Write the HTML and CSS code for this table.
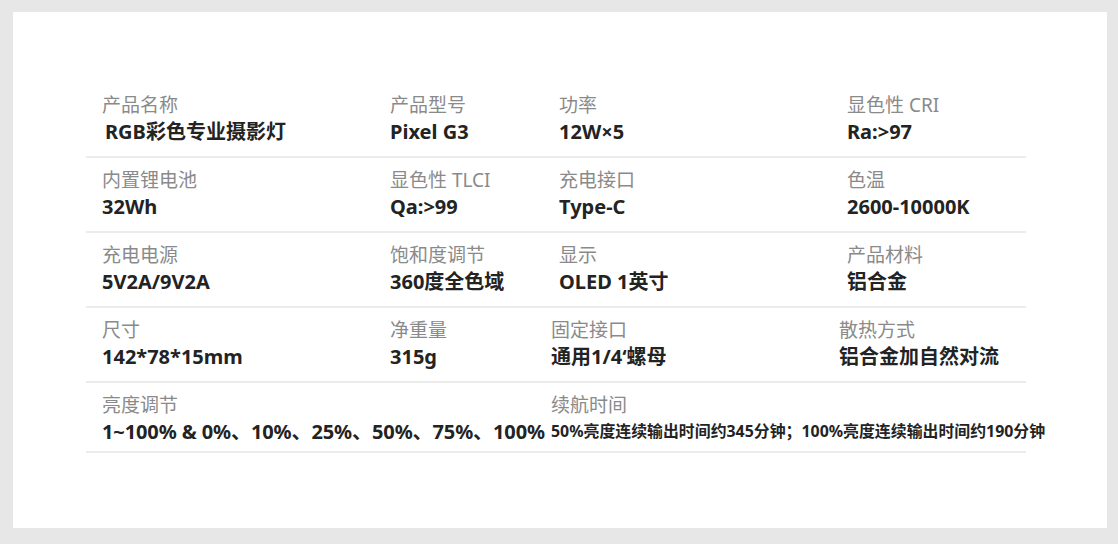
FILE: index.html
```html
<!DOCTYPE html>
<html lang="zh-CN">
<head>
<meta charset="utf-8">
<title>产品参数</title>
<link rel="stylesheet" href="styles.css">
</head>
<body>
<div class="card">
  <div class="specs">
    <div class="row">
      <div class="cell"><div class="label">产品名称</div><div class="value first">RGB彩色专业摄影灯</div></div>
      <div class="cell"><div class="label">产品型号</div><div class="value">Pixel G3</div></div>
      <div class="cell"><div class="label">功率</div><div class="value">12W×5</div></div>
      <div class="cell"><div class="label">显色性 CRI</div><div class="value">Ra:&gt;97</div></div>
    </div>
    <div class="row">
      <div class="cell"><div class="label">内置锂电池</div><div class="value">32Wh</div></div>
      <div class="cell"><div class="label">显色性 TLCI</div><div class="value">Qa:&gt;99</div></div>
      <div class="cell"><div class="label">充电接口</div><div class="value">Type-C</div></div>
      <div class="cell"><div class="label">色温</div><div class="value">2600-10000K</div></div>
    </div>
    <div class="row">
      <div class="cell"><div class="label">充电电源</div><div class="value">5V2A/9V2A</div></div>
      <div class="cell"><div class="label">饱和度调节</div><div class="value">360度全色域</div></div>
      <div class="cell"><div class="label">显示</div><div class="value">OLED 1英寸</div></div>
      <div class="cell"><div class="label">产品材料</div><div class="value">铝合金</div></div>
    </div>
    <div class="row shifted">
      <div class="cell"><div class="label">尺寸</div><div class="value">142*78*15mm</div></div>
      <div class="cell"><div class="label">净重量</div><div class="value">315g</div></div>
      <div class="cell"><div class="label">固定接口</div><div class="value">通用1/4‘螺母</div></div>
      <div class="cell"><div class="label">散热方式</div><div class="value">铝合金加自然对流</div></div>
    </div>
    <div class="row shifted last">
      <div class="cell"><div class="label">亮度调节</div><div class="value mid">1~100% &amp; 0%、10%、25%、50%、75%、100%</div></div>
      <div class="cell"><div class="label">续航时间</div><div class="value small">50%亮度连续输出时间约345分钟；100%亮度连续输出时间约190分钟</div></div>
    </div>
  </div>
</div>
</body>
</html>
```

FILE: styles.css
```css
html, body {
  margin: 0;
  padding: 0;
}
body {
  background: #e7e7e7;
  font-family: "Noto Sans", "Noto Sans CJK SC", sans-serif;
  width: 1118px;
  height: 544px;
  overflow: hidden;
}
.card {
  background: #ffffff;
  margin: 12px 11px 0 13px;
  height: 516px;
  padding: 71px 0 0 73px;
  box-sizing: border-box;
}
.specs {
  width: 940px;
}
.row {
  display: grid;
  grid-template-columns: 288px 169px 288px 1fr;
  padding: 10px 0 11px 16px;
  border-bottom: 2px solid #ebebeb;
}
.row.shifted {
  grid-template-columns: 288px 161px 288px 1fr;
}
.row.last {
  grid-template-columns: 449px 1fr;
  padding-bottom: 6px;
}
.cell {
  white-space: nowrap;
  min-width: 0;
}
.label {
  font-size: 19px;
  line-height: 25px;
  color: #8a8a8a;
  font-weight: 400;
}
.value {
  font-size: 20px;
  line-height: 27px;
  color: #232323;
  font-weight: 700;
}
.value.first {
  padding-left: 3px;
}
.value.mid {
  font-size: 20px;
  letter-spacing: -0.1px;
}
.value.small {
  font-size: 15.9px;
}
```
